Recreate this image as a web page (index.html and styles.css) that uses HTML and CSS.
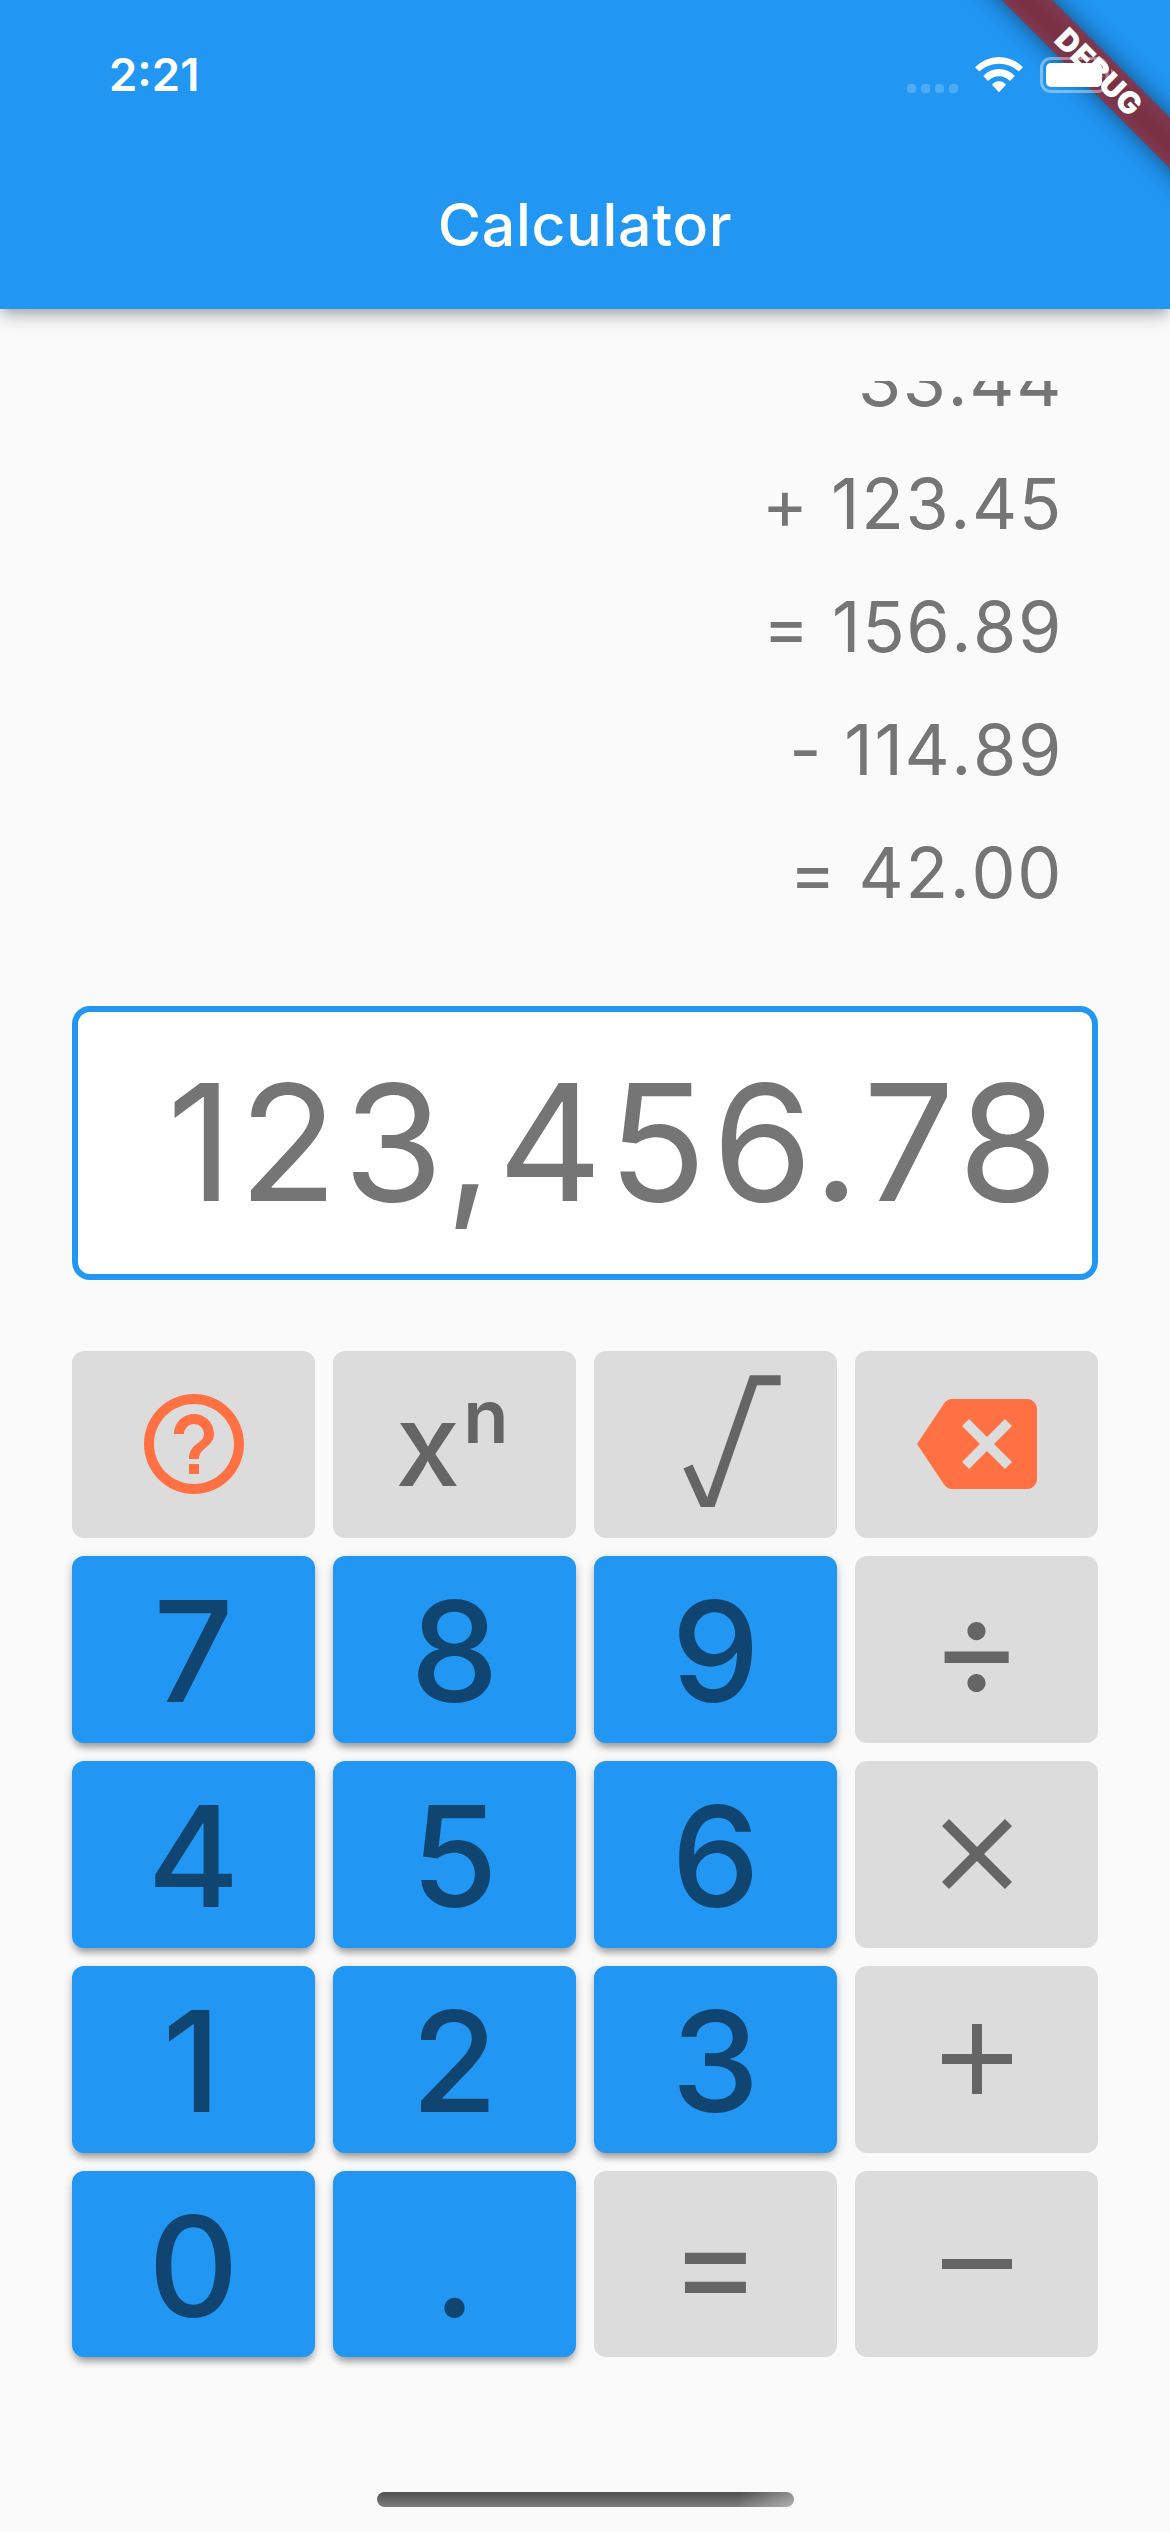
FILE: index.html
```html
<!DOCTYPE html>
<html lang="en">
<head>
<meta charset="utf-8">
<title>Calculator</title>
<link rel="stylesheet" href="styles.css">
</head>
<body>
<div class="screen">
  <header class="app-header">
    <div class="status-bar">
      <span class="time">2:21</span>
      <div class="status-icons">
        <span class="cell"><i></i><i></i><i></i><i></i></span>
        <svg class="wifi" viewBox="0 0 48 37" fill="#fff">
          <path d="M0 11.3A33 33 0 0 1 48 11.3L43.7 15.5A28.8 28.8 0 0 0 4.3 15.5Z"/>
          <path d="M8.3 20A21 21 0 0 1 39.7 20L35 25A15.2 15.2 0 0 0 13 25Z"/>
          <path d="M17 28.7A9 9 0 0 1 31 28.7L24 36.3Z"/>
        </svg>
        <svg class="battery" viewBox="0 0 76 36">
          <rect x="1.5" y="1.5" width="65.5" height="33" rx="9.5" fill="none" stroke="#fff" stroke-opacity=".4" stroke-width="3"/>
          <rect x="6" y="6" width="56" height="24" rx="5" fill="#fff"/>
          <path d="M71 12Q75 14 75 18T71 24Z" fill="#fff" fill-opacity=".4"/>
        </svg>
      </div>
    </div>
    <h1 class="title">Calculator</h1>
    <div class="banner-clip">
      <div class="banner"><span>DEBUG</span></div>
    </div>
  </header>

  <main class="content">
    <div class="history">
      <div>33.44</div>
      <div>+ 123.45</div>
      <div>= 156.89</div>
      <div>- 114.89</div>
      <div>= 42.00</div>
    </div>
    <div class="display">123,456.78</div>
    <div class="keypad">
      <button class="key"><svg class="icon accent" viewBox="0 0 24 24"><path d="M11 18h2v-2h-2v2zm1-16C6.48 2 2 6.48 2 12s4.48 10 10 10 10-4.48 10-10S17.52 2 12 2zm0 18c-4.41 0-8-3.59-8-8s3.59-8 8-8 8 3.59 8 8-3.59 8-8 8zm0-14c-2.21 0-4 1.79-4 4h2c0-1.1.9-2 2-2s2 .9 2 2c0 2-3 1.75-3 5h2c0-2.25 3-2.5 3-5 0-2.21-1.79-4-4-4z"/></svg></button>
      <button class="key power"><span class="base">x</span><span class="exponent">n</span></button>
      <button class="key"><svg class="root" viewBox="0 0 98 132"><path d="M5 91.5 21 127H28L70.5 5.2H97.6" fill="none" stroke="currentColor" stroke-width="10"/></svg></button>
      <button class="key"><svg class="icon accent" viewBox="0 0 24 24"><path d="M22 3H7c-.69 0-1.23.35-1.59.88L0 12l5.41 8.11c.36.53.9.89 1.59.89h15c1.1 0 2-.9 2-2V5c0-1.1-.9-2-2-2zm-3 12.59L17.59 17 14 13.41 10.41 17 9 15.59 12.59 12 9 8.41 10.41 7 14 10.59 17.59 7 19 8.41 15.41 12 19 15.59z"/></svg></button>

      <button class="key digit">7</button>
      <button class="key digit">8</button>
      <button class="key digit">9</button>
      <button class="key divide">÷</button>

      <button class="key digit">4</button>
      <button class="key digit">5</button>
      <button class="key digit">6</button>
      <button class="key"><svg class="icon" viewBox="0 0 24 24"><path d="M19 6.41 17.59 5 12 10.59 6.41 5 5 6.41 10.59 12 5 17.59 6.41 19 12 13.41 17.59 19 19 17.59 13.41 12z"/></svg></button>

      <button class="key digit one">1</button>
      <button class="key digit">2</button>
      <button class="key digit">3</button>
      <button class="key"><svg class="icon" viewBox="0 0 24 24"><path d="M19 13h-6v6h-2v-6H5v-2h6V5h2v6h6v2z"/></svg></button>

      <button class="key digit">0</button>
      <button class="key digit">.</button>
      <button class="key equals">=</button>
      <button class="key"><svg class="icon" viewBox="0 0 24 24"><path d="M19 13H5v-2h14v2z"/></svg></button>
    </div>
  </main>
  <div class="home-indicator"></div>
</div>
</body>
</html>
```
FILE: styles.css
```css
* { box-sizing: border-box; }

body {
  margin: 0;
  background: #fafafa;
  font-family: Inter, "Liberation Sans", sans-serif;
}

.screen {
  display: flex;
  flex-direction: column;
  width: 1170px;
  height: 2532px;
  overflow: hidden;
}

.app-header {
  position: relative;
  flex: none;
  height: 309px;
  background: #2196f3;
  color: #fff;
  box-shadow: 0 6px 12px -3px rgba(0, 0, 0, .26), 0 12px 15px rgba(0, 0, 0, .08), 0 3px 24px rgba(0, 0, 0, .08);
}

.status-bar {
  position: relative;
  z-index: 2;
  display: flex;
  justify-content: space-between;
  align-items: center;
  height: 141px;
  padding: 8px 54px 0 109px;
}

.time {
  font-size: 45.5px;
  font-weight: 600;
  line-height: 60px;
}

.status-icons {
  display: flex;
  align-items: flex-end;
  height: 37px;
}

.cell {
  display: flex;
  gap: 5px;
  margin-right: 17px;
}

.cell i {
  width: 9px;
  height: 9px;
  border-radius: 3px;
  background: rgba(255, 255, 255, .2);
}

.wifi { width: 48px; height: 37px; margin-right: 17px; }
.battery { width: 76px; height: 36px; }

.title {
  margin: 0;
  font-size: 59px;
  font-weight: 500;
  line-height: 168px;
  letter-spacing: .7px;
  text-align: center;
}

.banner-clip {
  position: absolute;
  top: 0;
  right: 0;
  z-index: 1;
  width: 240px;
  height: 240px;
  overflow: hidden;
}

.banner {
  position: absolute;
  left: 9px;
  top: 54px;
  width: 320px;
  height: 36px;
  transform: rotate(45deg);
}

.banner::before,
.banner::after {
  content: "";
  position: absolute;
  inset: 0;
}

.banner::before {
  background: rgba(0, 0, 0, .5);
  filter: blur(12px);
}

.banner::after { background: rgba(183, 28, 28, .63); }

.banner span {
  position: relative;
  z-index: 1;
  display: block;
  font-size: 30.5px;
  font-weight: 900;
  line-height: 36px;
  letter-spacing: .6px;
  text-align: center;
}

.content {
  display: flex;
  flex-direction: column;
  padding: 72px 72px 0;
}

.history {
  display: flex;
  flex-direction: column;
  justify-content: flex-end;
  height: 553px;
  margin-bottom: 72px;
  padding-right: 35px;
  overflow: hidden;
  color: #757575;
  font-size: 70px;
  font-kerning: none;
  letter-spacing: 1.6px;
  line-height: 123px;
  text-align: right;
}

.history div { flex: none; }

.display {
  height: 273.5px;
  margin-bottom: 71.5px;
  padding-right: 28px;
  border: 6px solid #2196f3;
  border-radius: 18px;
  background: #fff;
  color: #757575;
  font-size: 162px;
  letter-spacing: 5.7px;
  line-height: 260px;
  text-align: right;
  white-space: nowrap;
}

.keypad {
  display: grid;
  grid-template-columns: repeat(4, 243px);
  grid-auto-rows: 186.9px;
  gap: 18px;
}

.key {
  display: flex;
  align-items: center;
  justify-content: center;
  min-width: 0;
  padding: 0;
  border: 0;
  border-radius: 12px;
  background: #dcdcdc;
  color: #656565;
  font-family: inherit;
  font-weight: 500;
}

.digit {
  padding-top: 3px;
  background: #2196f3;
  color: #0f4570;
  font-size: 140px;
  box-shadow: 0 7px 7px -3px rgba(0, 0, 0, .24), 0 4px 8px rgba(0, 0, 0, .16), 0 2px 12px rgba(0, 0, 0, .08);
}

.one { padding-right: 4px; }

.icon {
  width: 120px;
  height: 120px;
  fill: currentColor;
}

.accent { color: #ff7043; }

.root {
  width: 98px;
  height: 132px;
  margin: -6px 0 0 33px;
}

.power { padding-right: 5px; }
.base { font-size: 116px; }

.exponent {
  margin: -57px 0 0 3px;
  font-size: 74px;
  font-weight: 600;
}

.divide { padding-bottom: 7px; font-size: 140px; font-weight: 400; }
.equals { padding-bottom: 5px; font-size: 138px; font-weight: 400; }

.home-indicator {
  width: 417px;
  height: 15px;
  margin: 135px auto 0;
  flex: none;
  border-radius: 7.5px;
  background: linear-gradient(115deg, transparent 86%, rgba(255, 255, 255, .4)), linear-gradient(#505050, #7c7c7c);
}
```
